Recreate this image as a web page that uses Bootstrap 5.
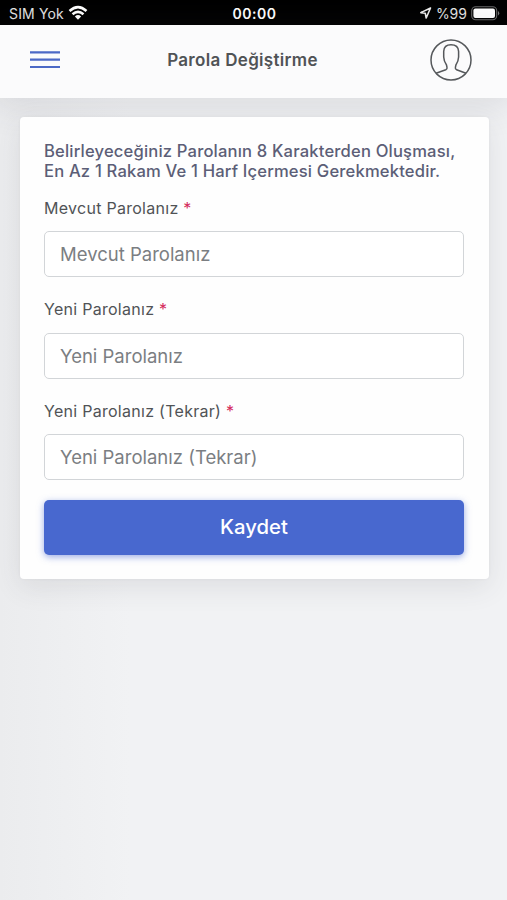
<!DOCTYPE html>
<html lang="tr">
<head>
<meta charset="utf-8">
<meta name="viewport" content="width=device-width, initial-scale=1">
<title>Parola Değiştirme</title>
<link href="https://cdn.jsdelivr.net/npm/bootstrap@5.3.0/dist/css/bootstrap.min.css" rel="stylesheet">
<style>
body{font-family:Inter,"Liberation Sans",sans-serif;background:linear-gradient(90deg,#ebecee 0,#f1f2f4 130px,#f1f2f4);color:#505356;min-height:900px;overflow:hidden}
.status-bar{height:25px;background:#000;color:#e4e4e4;font-size:14px;line-height:25px;padding:1px 7px 0 9px}
.sim{letter-spacing:.15px}
.status-time{color:#fff;font-weight:600;font-size:14px;letter-spacing:.5px}
.app-header{height:73px;background:#fbfbfc;padding:0 35px 4px 30px;box-shadow:0 4px 34px 4px rgba(60,65,75,.13);position:relative}
.app-title{font-size:17px;font-weight:600;color:#505356;line-height:20px;letter-spacing:.32px;padding-right:17px}
.side-slot{width:42px}
.menu-btn{line-height:0}
.form-card{margin:19px 18px 0 20px;height:462px;border-radius:4px;box-shadow:0 8px 28px rgba(60,65,75,.11),0 0 3px rgba(60,65,75,.06);padding:25px 25px 0 24px;background:#fefefe;position:relative}
.intro{font-size:16.6px;line-height:19.5px;font-weight:500;color:#5c5e77;white-space:nowrap;letter-spacing:.17px;margin-bottom:17px}
.field{margin-bottom:22px}
.field:last-of-type{margin-bottom:20px}
.field-label{font-size:16px;line-height:20px;color:#505356;letter-spacing:.28px;margin-bottom:13.3px}
.req{color:#d42a5b}
.field-input{height:46px;font-size:18.5px;padding:0 15px;border:1px solid #d2d5d8;border-radius:5px;background:#fff}
.field-input::placeholder{color:#7b7e82}
.save-btn{height:55px;background:#4868cf;color:#fff;font-size:20.3px;font-weight:500;border:0;border-radius:5px;box-shadow:0 2px 7px rgba(72,104,207,.55)}
</style>
<script src="https://cdn.jsdelivr.net/npm/bootstrap@5.3.0/dist/js/bootstrap.bundle.min.js"></script>
</head>
<body>
<div class="status-bar d-flex align-items-center justify-content-between">
  <div class="d-flex align-items-center col"><span class="sim">SIM Yok</span>
    <svg class="ms-1" width="20" height="16" viewBox="0 0 20 16" fill="none" stroke="#fff" stroke-width="2.5"><path d="M1.5 6Q10 -1.8 18.5 6"/><path d="M4.5 9.3Q10 4.4 15.5 9.3"/><path d="M6.9 11.4Q10 8.6 13.1 11.4L10 14.7Z" fill="#fff" stroke="none"/></svg>
  </div>
  <span class="status-time">00:00</span>
  <div class="d-flex align-items-center justify-content-end col">
    <svg width="14" height="14" viewBox="0 0 14 14" fill="none" stroke="#eee" stroke-width="1.6" stroke-linejoin="round"><path d="M12.5 2L2.8 6.6L7.3 7.3L8.2 12Z"/></svg>
    <span class="percent ms-1">%99</span>
    <svg class="ms-1" width="29" height="15" viewBox="0 0 29 15"><rect x=".7" y=".7" width="25" height="13" rx="4" fill="none" stroke="#686868" stroke-width="1.1"/><rect x="2.4" y="2.4" width="21.6" height="9.6" rx="2" fill="#fff"/><path d="M27 5Q29.5 7.2 27 9.5Z" fill="#777"/></svg>
  </div>
</div>
<header class="app-header d-flex align-items-center justify-content-between">
  <div class="side-slot"><button class="menu-btn btn p-0 border-0 d-block" aria-label="Menü"><svg width="30" height="20" viewBox="0 0 30 20" stroke="#4c69c6" stroke-width="2.2"><path d="M0 2.3h30M0 9.7h30M0 17h30"/></svg></button></div>
  <h1 class="app-title mb-0">Parola Değiştirme</h1>
  <div class="side-slot"><svg class="d-block" width="42" height="42" viewBox="0 0 42 42" fill="none" stroke="#55585b" stroke-width="1.5" stroke-linejoin="round"><circle cx="21" cy="21" r="20"/><path d="M6 34.2L15.8 30.8Q17.4 30.2 17 28.4L16.5 26Q13.9 22.5 13.7 18V12.4Q14 5.8 21 5.8Q28.3 5.8 28.6 12.4V18Q28.4 22.5 25.9 26L25.4 28.4Q25 30.2 26.6 30.8L36 34.2"/></svg></div>
</header>
<main class="form-card">
  <p class="intro">Belirleyeceğiniz Parolanın 8 Karakterden Oluşması,<br>En Az 1 Rakam Ve 1 Harf Içermesi Gerekmektedir.</p>
  <form>
    <div class="field"><label class="field-label d-block" for="p1">Mevcut Parolanız <span class="req">*</span></label>
    <input id="p1" type="password" class="form-control field-input" placeholder="Mevcut Parolanız"></div>
    <div class="field"><label class="field-label d-block" for="p2">Yeni Parolanız <span class="req">*</span></label>
    <input id="p2" type="password" class="form-control field-input" placeholder="Yeni Parolanız"></div>
    <div class="field"><label class="field-label d-block" for="p3">Yeni Parolanız (Tekrar) <span class="req">*</span></label>
    <input id="p3" type="password" class="form-control field-input" placeholder="Yeni Parolanız (Tekrar)"></div>
    <button type="button" class="btn save-btn w-100">Kaydet</button>
  </form>
</main>
</body>
</html>
